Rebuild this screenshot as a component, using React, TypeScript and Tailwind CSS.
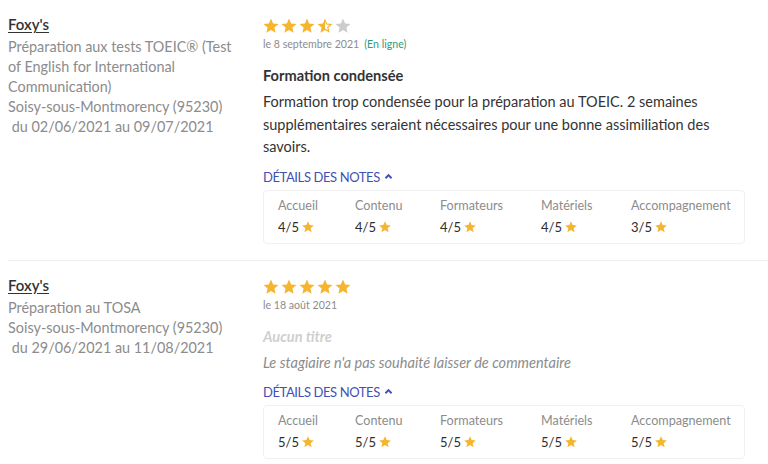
import React from "react";

const STAR = "M12 17.27L18.18 21l-1.64-7.03L22 9.24l-7.19-.61L12 2 9.19 8.63 2 9.24l5.46 4.73L5.82 21z";
const STAR_HALF =
  "M22 9.24l-7.19-.62L12 2 9.19 8.63 2 9.24l5.46 4.73L5.82 21 12 17.27 18.18 21l-1.63-7.03L22 9.24zM12 15.4V6.1l1.71 4.04 4.38.38-3.32 2.88 1 4.28L12 15.4z";

type Kind = "full" | "half" | "empty";

function Star({ kind, size = 20 }: { kind: Kind; size?: number }) {
  return (
    <svg width={size} height={size} viewBox="0 0 24 24" className={kind === "empty" ? "fill-[#cccccc]" : "fill-[#f5b52e]"}>
      <path d={kind === "half" ? STAR_HALF : STAR} />
    </svg>
  );
}

function Stars({ value }: { value: number }) {
  const items: Kind[] = [1, 2, 3, 4, 5].map((i) => (value >= i ? "full" : value >= i - 0.5 ? "half" : "empty"));
  return (
    <div className="flex -ml-[1px]">
      {items.map((k, i) => (
        <Star key={i} kind={k} size={18} />
      ))}
    </div>
  );
}

const COLS = [
  { label: "Accueil", w: "w-[77px]" },
  { label: "Contenu", w: "w-[85px]" },
  { label: "Formateurs", w: "w-[101px]" },
  { label: "Matériels", w: "w-[90px]" },
  { label: "Accompagnement", w: "flex-1" },
];

function Details({ notes }: { notes: number[] }) {
  return (
    <>
      <div className="mt-[8px] flex items-center gap-[4px] text-[13px] leading-[20px] uppercase text-[#3f51b5] tracking-[-0.4px]">
        DÉTAILS DES NOTES
        <svg width="9" height="7" viewBox="0 0 10 8" className="mt-[-1px]">
          <polyline points="1.5,6 5,2.5 8.5,6" fill="none" stroke="#3f51b5" strokeWidth="2.2" />
        </svg>
      </div>
      <div className="mt-[3px] w-[482px] flex border border-[#f0f0f0] rounded-[4px] pl-[14px] pr-[12px] pt-[7px] pb-[8px]">
        {COLS.map((c, i) => (
          <div key={c.label} className={c.w}>
            <div className="text-[12.6px] leading-[16px] text-[#8c8c8c]">{c.label}</div>
            <div className="mt-[5px] flex items-center gap-[2px] text-[13px] leading-[16px] text-[#2e2e2e]">
              {notes[i]}/5
              <Star kind="full" size={14} />
            </div>
          </div>
        ))}
      </div>
    </>
  );
}

type Review = {
  lines: string[];
  rating: number;
  date: string;
  online?: boolean;
  title?: string;
  body?: string;
  notes: number[];
};

const REVIEWS: Review[] = [
  {
    lines: [
      "Préparation aux tests TOEIC® (Test of English for International Communication)",
      "Soisy-sous-Montmorency (95230)",
      "\u00a0du 02/06/2021 au 09/07/2021",
    ],
    rating: 3.5,
    date: "le 8 septembre 2021",
    online: true,
    title: "Formation condensée",
    body: "Formation trop condensée pour la préparation au TOEIC. 2 semaines supplémentaires seraient nécessaires pour une bonne assimiliation des savoirs.",
    notes: [4, 4, 4, 4, 3],
  },
  {
    lines: ["Préparation au TOSA", "Soisy-sous-Montmorency (95230)", "\u00a0du 29/06/2021 au 11/08/2021"],
    rating: 5,
    date: "le 18 août 2021",
    notes: [5, 5, 5, 5, 5],
  },
];

export default function App() {
  return (
    <div className="w-[768px] h-[464px] overflow-hidden bg-white pl-2 font-['Lato','Liberation_Sans',sans-serif]">
      {REVIEWS.map((r, idx) => (
        <div key={idx} className={idx > 0 ? "border-t border-[#eeeeee] pt-[14px] pb-[16px]" : "pt-[14px] pb-[16px]"}>
          <div className="flex">
            <div className="w-[255px] shrink-0 pr-[18px]">
              <div className="text-[15px] leading-[20px] font-semibold text-[#333] underline underline-offset-2">Foxy's</div>
              <div className="mt-[3px] text-[14.4px] leading-[20px] text-[#8c8c8c]">
                {r.lines.map((l) => (
                  <div key={l}>{l}</div>
                ))}
              </div>
            </div>
            <div className="w-[482px] pt-[3px]">
              <Stars value={r.rating} />
              <div className="mt-[1px] text-[10.6px] leading-[16px] text-[#8c8c8c]">
                {r.date}
                {r.online && <span className="ml-[5px] text-[#2a9d84]">(En ligne)</span>}
              </div>
              {r.title ? (
                <div className="mt-[12px] text-[14.6px] leading-[24px] font-bold text-[#333]">{r.title}</div>
              ) : (
                <div className="mt-[12px] text-[14.6px] leading-[24px] italic font-bold text-[#cfcfcf]">Aucun titre</div>
              )}
              {r.body ? (
                <div className="mt-[3px] text-[14.5px] leading-[22.5px] text-[#333]">{r.body}</div>
              ) : (
                <div className="mt-[3px] text-[14.5px] leading-[22.5px] italic text-[#8c8c8c]">
                  Le stagiaire n'a pas souhaité laisser de commentaire
                </div>
              )}
              <Details notes={r.notes} />
            </div>
          </div>
        </div>
      ))}
    </div>
  );
}
